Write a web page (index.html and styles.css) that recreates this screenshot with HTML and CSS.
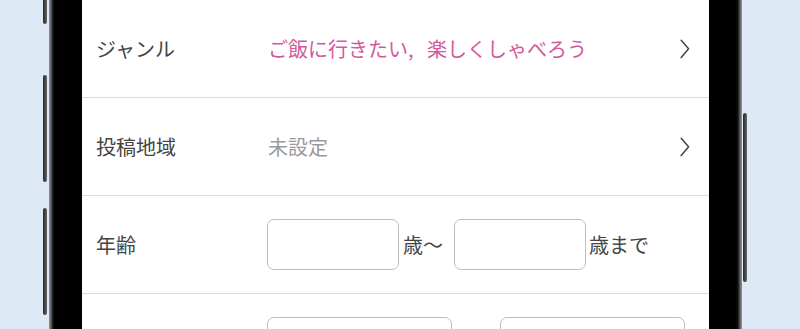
FILE: index.html
```html
<!DOCTYPE html>
<html lang="ja">
<head>
  <meta charset="UTF-8" />
  <meta name="viewport" content="width=device-width, initial-scale=1" />
  <title>募集条件</title>
  <link rel="stylesheet" href="styles.css">
</head>
<body>
  <div class="stage">
    <div class="side-left">
      <span class="side-btn btn-a"></span>
      <span class="side-btn btn-b"></span>
      <span class="side-btn btn-c"></span>
    </div>

    <div class="phone">
      <div class="screen">
        <div class="row">
          <div class="label">ジャンル</div>
          <div class="value pink">ご飯に行きたい, 楽しくしゃべろう</div>
          <svg class="chevron" width="10" height="20" viewBox="0 0 10 20">
            <path d="M1.2 1.2 L8.6 9.8 L1.2 18.6" fill="none" stroke="#444" stroke-width="1.5" stroke-linecap="round" stroke-linejoin="round"/>
          </svg>
        </div>

        <div class="row">
          <div class="label">投稿地域</div>
          <div class="value muted">未設定</div>
          <svg class="chevron" width="10" height="20" viewBox="0 0 10 20">
            <path d="M1.2 1.2 L8.6 9.8 L1.2 18.6" fill="none" stroke="#444" stroke-width="1.5" stroke-linecap="round" stroke-linejoin="round"/>
          </svg>
        </div>

        <div class="row">
          <div class="label">年齢</div>
          <div class="value range">
            <input type="text" class="box" />
            <span class="unit unit-from">歳〜</span>
            <input type="text" class="box" />
            <span class="unit unit-to">歳まで</span>
          </div>
        </div>

        <!-- next row, only the top of its inputs is on screen -->
        <div class="row">
          <div class="label"></div>
          <div class="value range">
            <input type="text" class="box wide" />
            <span class="spacer"></span>
            <input type="text" class="box wide" />
          </div>
        </div>
      </div>
    </div>

    <div class="side-right">
      <span class="side-btn btn-d"></span>
    </div>
  </div>
</body>
</html>
```

FILE: styles.css
```css
* {
  margin: 0; padding: 0; box-sizing: border-box;
}
body {
  background-color: #dde9f5;
  height: 329px;
  overflow: hidden;
  font-family: "Noto Sans CJK JP", "Noto Sans", sans-serif;
}
.stage {
  display: flex;
  height: 329px;
  padding-left: 43px;
}

/* side buttons */
.side-left {
  width: 4px;
  margin-right: 2px;
  display: flex;
  flex-direction: column;
}
.side-btn {
  display: block;
  width: 4px;
  border-radius: 2px;
  background: linear-gradient(to right, #2b2b2b, #4a4a4a 60%, #6a6a6a);
}
.btn-a { height: 28px; margin-top: -4px; border-radius: 0 0 2px 2px; }
.btn-b { height: 107px; margin-top: 51px; }
.btn-c { height: 107px; margin-top: 26px; }
.side-right {
  width: 4px;
  margin-left: 1px;
  padding-top: 113px;
}
.btn-d { height: 169px; }

/* phone body */
.phone {
  width: 693px;
  height: 329px;
  padding: 0 33px;
  background: linear-gradient(to right,
    #9a9a9a 0, #3c3c3c 3px, #111 4px, #000 6px,
    #000 calc(100% - 6px), #111 calc(100% - 4px), #3c3c3c calc(100% - 3px), #9a9a9a 100%);
}
.screen {
  width: 627px;
  height: 329px;
  background: #fff;
  overflow: hidden;
}

/* form rows */
.row {
  display: flex;
  align-items: center;
  height: 98px;
  border-bottom: 1px solid #dcdcdc;
  padding: 0 20px 0 14px;
  font-size: 20px;
  color: #444;
}
.label {
  width: 172px;
  flex: none;
  padding-bottom: 1px;
}
.value {
  flex: 1;
}
.pink {
  color: #d4589c;
  word-spacing: 9px;
}
.muted { color: #9a9a9a; }
.chevron {
  flex: none;
  margin-right: -1px;
}

.range {
  display: flex;
  align-items: center;
  margin-left: -1px;
}
.box {
  width: 132px;
  height: 51px;
  border: 1.5px solid #bdbdbd;
  border-radius: 7px;
  background: #fff;
  font-size: 18px;
}
.box.wide { width: 185px; }
.unit { color: #444; }
.unit-from { margin: 0 11px 0 4px; }
.unit-to { margin-left: 3px; }
.spacer {
  width: 48px;
}
```
